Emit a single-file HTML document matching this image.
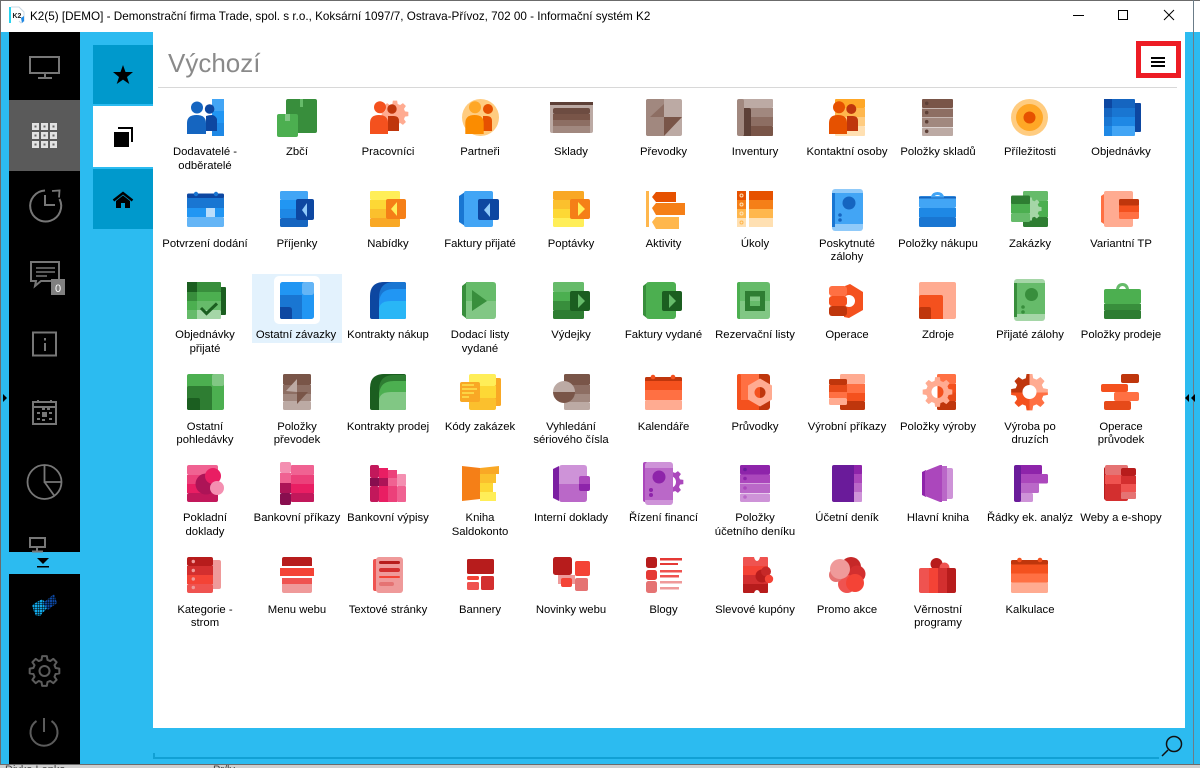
<!DOCTYPE html>
<html lang="cs">
<head>
<meta charset="utf-8">
<title>K2</title>
<style>
html,body{margin:0;padding:0;width:1200px;height:768px;overflow:hidden;background:#2cbbf0}
body{position:relative;font-family:"Liberation Sans",Arial,sans-serif;color:#000}
.a{position:absolute}
.l{position:absolute;width:100px;margin-left:-50px;text-align:center;font-size:11.3px;line-height:13.5px;color:#000;white-space:nowrap}
#title{left:30px;top:9px;font-size:11.7px;line-height:14px;white-space:nowrap;color:#000}
#h{left:168px;top:47px;font-size:26px;line-height:32px;color:#8a8a8a}
.bt{top:765px;height:3px;overflow:hidden;font-size:11px;color:#444;line-height:12px;white-space:nowrap}
.bt span{display:block;margin-top:-1px}
svg{position:absolute;left:0;top:0}
</style>
</head>
<body>
<div class="a" style="left:0;top:0;width:1200px;height:32px;background:#fff"></div>
<div class="a" style="left:0;top:0;width:1200px;height:1px;background:#6b6b6b"></div>
<div class="a" style="left:0;top:0;width:1px;height:768px;background:#6b6b6b"></div>
<div class="a" style="left:1193px;top:0;width:1px;height:764px;background:#6b7c88"></div>
<div class="a" style="left:0;top:764px;width:1200px;height:1px;background:#6b6b6b"></div>
<div class="a" style="left:0;top:765px;width:1200px;height:3px;background:#cfcfcf"></div>
<div class="a bt" style="left:5px"><span>Divka Lenka</span></div>
<div class="a bt" style="left:213px"><span>Pr/ly</span></div>
<div class="a" style="left:9px;top:32px;width:71px;height:520px;background:#000"></div>
<div class="a" style="left:9px;top:100px;width:71px;height:71px;background:#5a5a5a"></div>
<div class="a" style="left:9px;top:574px;width:71px;height:190px;background:#000"></div>
<div class="a" style="left:93px;top:45px;width:60px;height:59px;background:#0099cc"></div>
<div class="a" style="left:93px;top:106px;width:60px;height:61px;background:#fff"></div>
<div class="a" style="left:93px;top:169px;width:60px;height:60px;background:#0099cc"></div>
<div class="a" style="left:153px;top:32px;width:1032px;height:696px;background:#fff"></div>
<div class="a" style="left:158px;top:87px;width:1019px;height:1px;background:#d8d8d8"></div>
<div class="a" style="left:252px;top:274px;width:90px;height:69px;background:#e3f2fd"></div>
<div class="a" style="left:274px;top:276px;width:46px;height:48px;background:#fff;border-radius:5px"></div>
<div class="a" style="left:1136px;top:41px;width:35px;height:27px;border:5px solid #ed1c24"></div>
<div class="a" style="left:1151px;top:57px;width:14px;height:2px;background:#000"></div>
<div class="a" style="left:1151px;top:61px;width:14px;height:2px;background:#000"></div>
<div class="a" style="left:1151px;top:65px;width:14px;height:2px;background:#000"></div>
<div class="a" style="left:153px;top:757px;width:1006px;height:2px;background:#11a0d4"></div>
<div class="a" style="left:153px;top:753px;width:2px;height:5px;background:#11a0d4"></div>
<div class="a" id="title" style="top:10px">K2(5) [DEMO] - Demonstrační firma Trade, spol. s r.o., Koksární 1097/7, Ostrava-Přívoz, 702 00 - Informační systém K2</div>
<div class="a" id="h">Výchozí</div>

<svg width="1200" height="768" viewBox="0 0 1200 768">
<defs>
<pattern id="ck" width="2.500" height="2.500" patternUnits="userSpaceOnUse"><rect width="2" height="2" fill="#fff"/></pattern>
<mask id="dm"><rect width="1200" height="768" fill="url(#ck)"/></mask>
<polygon id="gear" points="-2.98,-11.11 -2.35,-14.82 2.35,-14.82 2.98,-11.11 5.75,-9.96 8.82,-12.14 12.14,-8.82 9.96,-5.75 11.11,-2.98 14.82,-2.35 14.82,2.35 11.11,2.98 9.96,5.75 12.14,8.82 8.82,12.14 5.75,9.96 2.98,11.11 2.35,14.82 -2.35,14.82 -2.98,11.11 -5.75,9.96 -8.82,12.14 -12.14,8.82 -9.96,5.75 -11.11,2.98 -14.82,2.35 -14.82,-2.35 -11.11,-2.98 -9.96,-5.75 -12.14,-8.82 -8.82,-12.14 -5.75,-9.96"/>
<clipPath id="q1"><rect x="0" y="0" width="18.5" height="18.5"/></clipPath>
<clipPath id="q2"><rect x="18.5" y="0" width="18.5" height="18.5"/></clipPath>
<clipPath id="q3"><rect x="0" y="18.5" width="18.5" height="18.5"/></clipPath>
<clipPath id="q4"><rect x="18.5" y="18.5" width="18.5" height="18.5"/></clipPath>
</defs>

<!-- title bar -->
<g>
<rect x="9" y="7" width="2" height="16" fill="#29d3ee"/>
<path d="M11 7h8l5 5v9l-3 2-2-2" fill="none" stroke="#c8d8e4" stroke-width="1"/>
<text x="12.5" y="18" font-family="Liberation Sans" font-weight="700" font-size="7" fill="#222">K2</text>
<path d="M21 18l3-2v5l-2 2z" fill="#1e88e5"/>
<rect x="1073" y="15" width="11" height="1" fill="#000"/>
<rect x="1118.5" y="10.5" width="9" height="9" fill="none" stroke="#000"/>
<path d="M1164 10l10 10M1174 10l-10 10" stroke="#000" stroke-width="1"/>
</g>

<!-- left sidebar icons -->
<g fill="none" stroke="#777" stroke-width="2">
<rect x="30" y="57" width="29" height="16"/>
<path d="M45 74v3M38 78h14" />
</g>
<g>
<g fill="#e2e2e2"><rect x="32" y="123" width="7" height="7"/><rect x="41" y="123" width="7" height="7"/><rect x="50" y="123" width="7" height="7"/><rect x="32" y="132" width="7" height="7"/><rect x="41" y="132" width="7" height="7"/><rect x="50" y="132" width="7" height="7"/><rect x="32" y="141" width="7" height="7"/><rect x="41" y="141" width="7" height="7"/><rect x="50" y="141" width="7" height="7"/></g>
<g fill="#666"><rect x="34.500" y="125.500" width="2" height="2"/><rect x="43.500" y="125.500" width="2" height="2"/><rect x="52.500" y="125.500" width="2" height="2"/><rect x="34.500" y="134.500" width="2" height="2"/><rect x="43.500" y="134.500" width="2" height="2"/><rect x="52.500" y="134.500" width="2" height="2"/><rect x="34.500" y="143.500" width="2" height="2"/><rect x="43.500" y="143.500" width="2" height="2"/><rect x="52.500" y="143.500" width="2" height="2"/></g>
</g>
<g fill="none" stroke="#777" stroke-width="2">
<path d="M45 190.500A15.500 15.500 0 1 0 59.500 199"/>
<path d="M52 191l7.500-.5-.5 7" stroke-width="1.800"/>
<path d="M45 195v10h10"/>
<path d="M31 262h28v19H41l-6 5 1-5h-5z"/>
<path d="M36 268h19M36 272h19M36 276h11" stroke-width="1.600"/>
<rect x="33" y="332.500" width="23" height="23"/>
<path d="M45 343v8M45 338v2.500"/>
<rect x="33" y="402" width="23" height="22"/>
<path d="M33 407h23M38 400v3M51 400v3"/>
</g>
<g fill="#777"><rect x="42" y="412" width="5" height="5"/><rect x="37" y="412" width="3" height="2"/><rect x="49" y="412" width="3" height="2"/><rect x="37" y="418" width="3" height="2"/><rect x="42" y="419" width="3" height="2"/><rect x="49" y="418" width="3" height="2"/><rect x="42" y="408" width="3" height="2"/><rect x="47" y="408" width="3" height="2"/></g>
<rect x="51" y="279" width="14" height="16" fill="#808080"/>
<text x="58" y="292" text-anchor="middle" font-family="Liberation Sans" font-size="11" fill="#fff">0</text>
<g fill="none" stroke="#777" stroke-width="1.800">
<circle cx="44.500" cy="482" r="17"/>
<path d="M44.500 465v17h17M44.500 482l10 14"/>
<rect x="30" y="538" width="15" height="9" stroke-width="2"/>
<path d="M37 548v3M32 551.500h11" stroke-width="2"/>
</g>
<path d="M37 558h12l-6 6z" fill="#000"/>
<rect x="37" y="566" width="12" height="1.500" fill="#000"/>
<g mask="url(#dm)">
<path d="M32 605l10-6 7 7-9 10-5-1z" fill="#12aaea"/>
<path d="M43 603l11-9 3 9-9 7z" fill="#0d47a1"/>
</g>
<g fill="none" stroke="#5c5c5c" stroke-width="2">
<use href="#gear" transform="translate(44.500,671)" stroke-linejoin="round"/>
<circle cx="44.500" cy="671" r="5"/>
<path d="M36.500 721A13.500 13.500 0 1 0 51.500 721"/>
<path d="M44 718v14"/>
</g>
<path d="M3 394l4 4-4 4z" fill="#000"/>
<path d="M1189 394l-4 4 4 4zM1195 394l-4 4 4 4z" fill="#000"/>

<!-- tabs -->
<polygon points="123,65 125.500,72 133,72 127,77 129.300,84 123,79.600 116.700,84 119,77 113,72 120.500,72" fill="#000"/>
<path d="M118 127h15v15h-2v-13h-13z" fill="#000"/>
<rect x="114" y="132" width="15" height="15" fill="#000"/>
<path d="M113.500 200.500l9.500-7.500 9.500 7.500" fill="none" stroke="#000" stroke-width="2.400"/>
<path d="M116 201l7-5.500 7 5.500v7h-5v-5h-4v5h-5z" fill="#000"/>

<!-- search -->
<g fill="none" stroke="#111" stroke-width="1.500"><circle cx="1174" cy="744" r="7.500"/><path d="M1168 750l-6 6"/></g>

<!-- ICONS ROW 0 -->
<g transform="translate(187,99)">
<rect x="25" width="12" height="12" fill="#42a5f5"/><rect x="25" y="12" width="12" height="12" fill="#2196f3"/><rect x="25" y="24" width="12" height="13" fill="#1e88e5"/>
<circle cx="22.600" cy="10" r="4.800" fill="#0d47a1"/><path d="M19 17q3-1 6-1t5 4v12H19z" fill="#0d47a1"/>
<circle cx="10" cy="8.500" r="6" fill="#1565c0"/><path d="M0 35V24q0-8 9.500-8T19 24v11z" fill="#1565c0"/>
</g>
<g transform="translate(277,99)">
<rect x="9" width="31" height="34" rx="2" fill="#388e3c"/><rect x="23" width="3" height="8" fill="#66bb6a"/>
<rect y="15" width="21" height="23" rx="2" fill="#4caf50"/><rect x="8" y="15" width="5" height="7" fill="#81c784"/>
</g>
<g transform="translate(370,99)">
<use href="#gear" transform="translate(25,15) scale(.9)" fill="#ffab91"/>
<circle cx="22" cy="10" r="4.700" fill="#bf360c"/><path d="M18 17h6q5 0 5 5v10H18z" fill="#bf360c"/>
<circle cx="10" cy="8.300" r="6" fill="#f4511e"/><path d="M0 35V24q0-8 9-8t9 8v11z" fill="#f4511e"/>
</g>
<g transform="translate(462,99)">
<circle cx="18.500" cy="18.500" r="18.500" fill="#ffcc80"/>
<circle cx="13" cy="8.300" r="6" fill="#ffa726"/><circle cx="26" cy="10" r="5" fill="#e65100"/>
<path d="M21 17h4q5 0 5 5v10h-9z" fill="#e65100"/><path d="M3.300 35V24q0-8 9.200-8t9.200 8v11z" fill="#fb8c00"/>
</g>
<g transform="translate(550,99)">
<rect y="3" width="43" height="31" rx="2" fill="#bcaaa4"/><rect y="3" width="43" height="3" fill="#5d4037"/>
<rect x="3" y="9" width="37" height="6" rx="2" fill="#6d4c41"/><rect x="3" y="15" width="37" height="6" fill="#795548"/><rect x="3" y="21" width="37" height="6" fill="#8d6e63"/><rect x="3" y="27" width="37" height="7" fill="#a1887f"/>
</g>
<g transform="translate(646,99)">
<rect width="36" height="37" rx="2" fill="#bcaaa4"/><path d="M2 0h16v37H2q-2 0-2-2V2q0-2 2-2z" fill="#a1887f"/>
<path d="M4 18L18 5v13z" fill="#8d6e63"/><path d="M18 18h18L18 37z" fill="#795548"/>
</g>
<g transform="translate(737,99)">
<rect x="5" y="0" width="31" height="9" rx="1" fill="#bcaaa4"/><rect x="5" y="9" width="31" height="9" fill="#a1887f"/><rect x="5" y="18" width="31" height="9" fill="#8d6e63"/><rect x="5" y="27" width="31" height="10" rx="1" fill="#795548"/>
<rect width="7" height="37" rx="2" fill="#a1887f"/><path d="M7 9h5q2 0 2 2v26H7z" fill="#5d4037"/>
</g>
<g transform="translate(829,99)">
<rect x="6" width="30" height="9" rx="1" fill="#ffa726"/><rect x="6" y="9" width="30" height="9" fill="#ffb74d"/><rect x="6" y="18" width="30" height="9" fill="#ffcc80"/><rect x="6" y="27" width="30" height="10" rx="1" fill="#ffe0b2"/>
<circle cx="22.300" cy="10" r="5" fill="#bf360c"/><path d="M18 17h6q5 0 5 5v10H18z" fill="#bf360c"/>
<circle cx="10" cy="8.300" r="6" fill="#e65100"/><path d="M0 35V24q0-8 9-8t9 8v11z" fill="#e65100"/>
</g>
<g transform="translate(922,99)">
<rect width="31" height="9" rx="1" fill="#795548"/><rect y="9.500" width="31" height="9" fill="#8d6e63"/><rect y="19" width="31" height="9" fill="#a1887f"/><rect y="28.500" width="31" height="8.500" rx="1" fill="#bcaaa4"/>
<g fill="#5d4037"><circle cx="4.700" cy="4.300" r="1.800"/><circle cx="4.700" cy="13.600" r="1.800"/><circle cx="4.700" cy="22.700" r="1.800"/><circle cx="4.700" cy="32.300" r="1.800"/></g>
</g>
<g transform="translate(1011,99)"><circle cx="18.500" cy="18.500" r="18.500" fill="#ffcc80"/><circle cx="18.500" cy="18.500" r="13.500" fill="#ffa726"/><circle cx="18.500" cy="18.500" r="6" fill="#e65100"/></g>
<g transform="translate(1104,99)">
<rect x="29" y="4" width="8" height="29" rx="1" fill="#0d47a1"/>
<rect width="31" height="9.500" rx="1" fill="#1565c0"/><rect y="9" width="31" height="9.500" fill="#1976d2"/><rect y="18" width="31" height="9.500" fill="#1e88e5"/><rect y="27" width="31" height="10" rx="1" fill="#42a5f5"/>
<rect width="8" height="9" fill="#0d47a1"/><rect y="9" width="8" height="9" fill="#1565c0"/><rect y="18" width="8" height="9" fill="#1976d2"/><rect y="27" width="8" height="10" fill="#1e88e5"/>
</g>

<!-- ROW 1 -->
<g transform="translate(187,191)">
<rect y="2.500" width="37" height="5" rx="1.500" fill="#0d47a1"/><circle cx="9" cy="3" r="2.200" fill="#1976d2"/><circle cx="29" cy="3" r="2.200" fill="#1976d2"/>
<rect y="7" width="37" height="10" fill="#1976d2"/><rect y="17" width="37" height="9" fill="#2196f3"/><rect y="26" width="37" height="10" rx="1.500" fill="#64b5f6"/><rect x="19" y="17" width="9" height="9" fill="#bbdefb"/>
</g>
<g transform="translate(280,191)">
<rect width="28" height="9" rx="1.500" fill="#42a5f5"/><rect y="9" width="28" height="9" fill="#2196f3"/><rect y="18" width="28" height="9" fill="#1e88e5"/><rect y="27" width="28" height="9" rx="1.500" fill="#1565c0"/>
<rect x="16" y="8" width="18" height="21" rx="2" fill="#0d47a1"/><path d="M22 19l5-7v14z" fill="#90caf9"/>
</g>
<g transform="translate(370,191)">
<rect width="30" height="9" rx="1.500" fill="#ffee58"/><rect y="9" width="30" height="9" fill="#fdd835"/><rect y="18" width="30" height="9" fill="#fbc02d"/><rect y="27" width="30" height="9" rx="1.500" fill="#f9a825"/>
<rect x="16" y="8" width="20" height="20" rx="2" fill="#f57f17"/><path d="M21 18l6-7v14z" fill="#ffee58"/>
</g>
<g transform="translate(459,191)">
<path d="M0 5l6-4v34l-6-4z" fill="#1976d2"/><rect x="5" width="29" height="36" rx="2" fill="#42a5f5"/>
<rect x="19" y="8" width="21" height="21" rx="2" fill="#0d47a1"/><path d="M25 19l6-7v14z" fill="#90caf9"/>
</g>
<g transform="translate(553,191)">
<rect width="31" height="9" rx="1.500" fill="#f9a825"/><rect y="9" width="31" height="9" fill="#fbc02d"/><rect y="18" width="31" height="9" fill="#fdd835"/><rect y="27" width="31" height="9" rx="1.500" fill="#ffee58"/>
<rect x="17" y="8" width="20" height="20" rx="2" fill="#f57f17"/><path d="M25 11l7 7-7 7z" fill="#ffee58"/>
</g>
<g transform="translate(646,191)">
<rect width="3" height="36" fill="#ffb74d"/>
<path d="M6 6l4-5h20v10H10z" fill="#e65100"/><path d="M6 17l4-5h29v12H10z" fill="#f57f17"/><path d="M6 31l4-5h23v12H10z" fill="#ffb74d"/>
</g>
<g transform="translate(737,191)">
<rect width="9" height="9" fill="#e65100"/><rect y="9" width="9" height="9" fill="#f57f17"/><rect y="18" width="9" height="9" fill="#ffb74d"/><rect y="27" width="9" height="9" fill="#ffe0b2"/>
<rect x="12" width="24" height="9" fill="#e65100"/><rect x="12" y="9" width="24" height="9" fill="#f57f17"/><rect x="12" y="18" width="24" height="9" fill="#ffb74d"/><rect x="12" y="27" width="24" height="9" fill="#ffe0b2"/>
<g fill="none" stroke="#ffe0b2" stroke-width="1"><circle cx="4.500" cy="4.500" r="1.500"/><circle cx="4.500" cy="13.500" r="1.500"/><circle cx="4.500" cy="22.500" r="1.500"/></g><circle cx="4.500" cy="31.500" r="1.500" fill="none" stroke="#ffb74d"/>
</g>
<g transform="translate(832,189)">
<rect width="31" height="42" rx="3" fill="#90caf9"/><rect x="0" y="4" width="3" height="34" fill="#1976d2"/><rect x="3" y="4" width="28" height="31" fill="#42a5f5"/>
<circle cx="17" cy="14" r="6.500" fill="#1565c0"/><circle cx="8" cy="26" r="1.800" fill="#1565c0"/><circle cx="8" cy="31" r="1.800" fill="#1565c0"/>
</g>
<g transform="translate(919,191)">
<path d="M12 6q1-5 6.500-5T25 6h-3q-1-2-3.500-2T15 6z" fill="#42a5f5"/>
<rect y="5" width="37" height="12" rx="2" fill="#42a5f5"/><rect y="5.500" width="37" height="2" fill="#1565c0"/><rect x="12" y="5" width="13" height="1.500" fill="#42a5f5"/>
<rect y="17" width="37" height="9" fill="#1e88e5"/><rect y="26" width="37" height="10" rx="1.500" fill="#1976d2"/>
</g>
<g transform="translate(1011,191)">
<rect x="12" width="25" height="10" rx="1.500" fill="#66bb6a"/><rect x="12" y="10" width="25" height="16" fill="#4caf50"/><rect x="12" y="26" width="25" height="10" rx="1.500" fill="#2e7d32"/>
<use href="#gear" transform="translate(19,18) scale(.78)" fill="#a5d6a7"/>
<rect y="4.500" width="19" height="9" rx="1.500" fill="#2e7d32"/><rect y="13" width="19" height="9" fill="#4caf50"/><rect y="22" width="19" height="9" rx="1.500" fill="#66bb6a"/>
</g>
<g transform="translate(1101,191)">
<path d="M0 5l6-4v34l-6-4z" fill="#ff7043"/><rect x="3" width="29" height="36" rx="2" fill="#ffab91"/>
<rect x="18" y="8" width="20" height="7" rx="1.500" fill="#bf360c"/><rect x="18" y="14.500" width="20" height="7" fill="#f4511e"/><rect x="18" y="21" width="20" height="7" rx="1.500" fill="#ff7043"/>
</g>

<!-- ROW 2 -->
<g transform="translate(187,282)">
<rect x="32" y="5" width="7" height="28" rx="1" fill="#1b5e20"/>
<rect width="34" height="10" rx="1" fill="#388e3c"/><rect y="10" width="34" height="9" fill="#4caf50"/><rect y="19" width="34" height="9" fill="#66bb6a"/><rect y="28" width="34" height="9" rx="1" fill="#a5d6a7"/>
<rect width="10" height="10" fill="#1b5e20"/><rect y="10" width="10" height="9" fill="#388e3c"/><rect y="19" width="10" height="9" fill="#4caf50"/><rect y="28" width="10" height="9" fill="#66bb6a"/>
<path d="M14 26l5.500 5.500L30 21.500" fill="none" stroke="#1b5e20" stroke-width="3"/>
</g>
<g transform="translate(280,282)">
<rect width="34" height="37" rx="2.500" fill="#2196f3"/><rect x="22" width="12" height="13" rx="2.500" fill="#64b5f6"/><path d="M0 13h22v24H2q-2 0-2-2z" fill="#1976d2"/><path d="M0 25h9q3 0 3 3v9H2q-2 0-2-2z" fill="#0d47a1"/>
</g>
<g transform="translate(370,282)">
<path d="M0 35V14Q0 0 14 0h20q2 0 2 2v33q0 2-2 2H2q-2 0-2-2z" fill="#0d47a1"/>
<path d="M9 37V16Q9 0 24 0h10q2 0 2 2v33q0 2-2 2z" fill="#1976d2"/>
<path d="M9 37V22Q9 7 24 7h12v28q0 2-2 2z" fill="#2196f3"/>
<path d="M9 37v-9q0-9 12-9h15v16q0 2-2 2z" fill="#29b6f6"/>
</g>
<g transform="translate(462,282)">
<path d="M0 4l5-4v37l-5-4z" fill="#388e3c"/><path d="M4 0h27q3 0 3 3v16H4z" fill="#66bb6a"/><path d="M4 19h30v15q0 3-3 3H4z" fill="#81c784"/><path d="M10 8l15 11-15 10z" fill="#388e3c"/>
</g>
<g transform="translate(553,282)">
<rect width="31" height="10" rx="1.500" fill="#66bb6a"/><rect y="10" width="31" height="9" fill="#4caf50"/><rect y="19" width="31" height="9" fill="#388e3c"/><rect y="28" width="31" height="9" rx="1.500" fill="#2e7d32"/>
<rect x="17" y="9" width="20" height="20" rx="2" fill="#1b5e20"/><path d="M25 12l7 7-7 7z" fill="#66bb6a"/>
</g>
<g transform="translate(643,282)">
<path d="M0 4l5-4v37l-5-4z" fill="#388e3c"/><rect x="3" width="30" height="37" rx="3" fill="#4caf50"/>
<rect x="19" y="9" width="20" height="20" rx="2" fill="#1b5e20"/><path d="M26 12l7 7-7 7z" fill="#66bb6a"/>
</g>
<g transform="translate(737,282)">
<rect width="5" height="37" rx="2" fill="#4caf50"/><path d="M3 0h27q3 0 3 3v16H3z" fill="#66bb6a"/><path d="M3 19h30v15q0 3-3 3H3z" fill="#81c784"/>
<rect x="8" y="9" width="20" height="20" fill="#2e7d32"/><rect x="13" y="14.500" width="10" height="4.500" fill="#81c784"/><rect x="13" y="19" width="10" height="5" fill="#66bb6a"/>
</g>
<g transform="translate(829,282)">
<path fill-rule="evenodd" d="M16 4l5-2 13 8v18l-14 8-5-1zM20 13a6 6 0 1 0 0 12 6 6 0 0 0 0-12z" fill="#f4511e"/>
<rect y="4" width="18" height="10" rx="3" fill="#ff7043"/><rect y="14" width="18" height="10" rx="3" fill="#f4511e"/><rect y="24" width="18" height="10" rx="3" fill="#bf360c"/>
</g>
<g transform="translate(919,282)">
<rect width="37" height="37" rx="2" fill="#ffab91"/><path d="M0 15q0-2 2-2h20q2 0 2 2v22H2q-2 0-2-2z" fill="#f4511e"/><path d="M0 27q0-2 2-2h8q2 0 2 2v10H2q-2 0-2-2z" fill="#bf360c"/>
</g>
<g transform="translate(1014,279)">
<rect width="31" height="42" rx="3" fill="#a5d6a7"/><rect x="0" y="4" width="3" height="34" fill="#388e3c"/><rect x="3" y="4" width="28" height="31" fill="#66bb6a"/>
<circle cx="17.500" cy="15.500" r="6.500" fill="#388e3c"/><circle cx="9" cy="28" r="1.800" fill="#388e3c"/><circle cx="9" cy="33" r="1.800" fill="#388e3c"/>
</g>
<g transform="translate(1104,282)">
<path d="M12 7q1-6 6.500-6T25 7h-3q-1-3-3.500-3T15 7z" fill="#66bb6a"/>
<rect y="7" width="37" height="15" rx="2" fill="#4caf50"/><rect y="22" width="37" height="6" fill="#388e3c"/><rect y="28" width="37" height="9" rx="1.500" fill="#2e7d32"/>
</g>

<!-- ROW 3 -->
<g transform="translate(187,374)">
<rect width="37" height="36" rx="2" fill="#4caf50"/><rect x="25" width="12" height="12" rx="2" fill="#81c784"/><path d="M0 14q0-2 2-2h21q2 0 2 2v22H2q-2 0-2-2z" fill="#2e7d32"/><path d="M0 26q0-2 2-2h9q2 0 2 2v10H2q-2 0-2-2z" fill="#1b5e20"/>
</g>
<g transform="translate(283,374)">
<rect width="28" height="11" rx="1.500" fill="#795548"/><rect y="11" width="28" height="9" fill="#8d6e63"/><rect y="20" width="28" height="7" fill="#a1887f"/><rect y="27" width="28" height="9" rx="1.500" fill="#bcaaa4"/>
<path d="M3 17l11-12v13z" fill="#bcaaa4"/><path d="M14 18h11L14 30z" fill="#795548"/>
</g>
<g transform="translate(370,374)">
<path d="M0 34V14Q0 0 14 0h20q2 0 2 2v32q0 2-2 2H2q-2 0-2-2z" fill="#1b5e20"/>
<path d="M9 36V16Q9 1 24 1h12v33q0 2-2 2z" fill="#2e7d32"/>
<path d="M9 36V22Q9 7 24 7h12v27q0 2-2 2z" fill="#4caf50"/>
<path d="M9 36v-9q0-9 12-9h15v16q0 2-2 2z" fill="#81c784"/>
</g>
<g transform="translate(460,374)">
<rect x="30" y="4" width="11" height="28" rx="1.500" fill="#f9a825"/><rect x="9" width="27" height="12" rx="2" fill="#ffee58"/><rect x="9" y="12" width="27" height="12" fill="#fdd835"/><rect x="9" y="24" width="27" height="12" rx="2" fill="#fbc02d"/>
<rect y="8" width="20" height="20" rx="2" fill="#f9a825"/><path d="M2 11h12M2 15h15M2 19h12M2 23h7" stroke="#ffee58" stroke-width="1.300"/>
</g>
<g transform="translate(553,374)">
<rect x="11" width="26" height="11" rx="1.500" fill="#795548"/><rect x="11" y="11" width="26" height="9" fill="#8d6e63"/><rect x="11" y="20" width="26" height="8" fill="#a1887f"/><rect x="11" y="28" width="26" height="8" rx="1.500" fill="#bcaaa4"/>
<path d="M0 18a11 11 0 0 1 22 0z" fill="#bcaaa4"/><path d="M0 18a11 11 0 0 0 22 0z" fill="#795548"/>
</g>
<g transform="translate(645,374)">
<rect y="3" width="37" height="5" rx="1.500" fill="#bf360c"/><circle cx="8" cy="3" r="2.300" fill="#f4511e"/><circle cx="28" cy="3" r="2.300" fill="#f4511e"/>
<rect y="7" width="37" height="9" fill="#f4511e"/><rect y="16" width="37" height="10" fill="#ff7043"/><rect y="26" width="37" height="10" rx="1.500" fill="#ffab91"/>
</g>
<g transform="translate(737,374)">
<rect width="33" height="36" rx="3" fill="#bf360c"/><path d="M3 0h19v11L12 18l10 7v11H3q-3 0-3-3V3q0-3 3-3z" fill="#ff7043"/><path d="M0 26h22v10H3q-3 0-3-3z" fill="#f4511e"/><rect width="4" height="36" rx="2" fill="#f4511e"/>
<path d="M23 4.500l12 7v14l-12 7-12-7v-14z" fill="#ffab91"/><path d="M23 13a5.500 5.500 0 0 0 0 11z" fill="#f4511e"/><path d="M23 13a5.500 5.500 0 0 1 0 11z" fill="#bf360c"/>
</g>
<g transform="translate(829,374)">
<rect x="11" width="25" height="10" rx="1.500" fill="#ffab91"/><rect x="11" y="10" width="25" height="9" fill="#ff7043"/><rect x="11" y="19" width="25" height="8" fill="#f4511e"/><rect x="11" y="27" width="25" height="9" rx="1.500" fill="#bf360c"/>
<rect y="5" width="18" height="6" rx="1.500" fill="#bf360c"/><rect y="11" width="18" height="7" fill="#e64a19"/><rect y="18" width="18" height="6" fill="#ff7043"/><rect y="24" width="18" height="7" rx="1.500" fill="#ffab91"/>
</g>
<g transform="translate(922,374)">
<rect x="15" width="19" height="10" rx="1.500" fill="#ff7043"/><rect x="15" y="10" width="19" height="8.500" fill="#f4511e"/><rect x="15" y="18.500" width="19" height="8.500" fill="#e64a19"/><rect x="15" y="27" width="19" height="9" rx="1.500" fill="#bf360c"/>
<use href="#gear" transform="translate(15.500,18)" fill="#ffab91"/>
<path d="M15.500 12a6 6 0 0 0 0 12z" fill="#fff"/><path d="M15.500 12a6 6 0 0 1 0 12z" fill="#f4511e"/>
</g>
<g transform="translate(1011,374)">
<g clip-path="url(#q1)"><use href="#gear" transform="translate(18.500,18) scale(1.240)" fill="#bf360c"/></g>
<g clip-path="url(#q2)"><use href="#gear" transform="translate(18.500,18) scale(1.240)" fill="#ffab91"/></g>
<g clip-path="url(#q3)"><use href="#gear" transform="translate(18.500,18) scale(1.240)" fill="#f4511e"/></g>
<g clip-path="url(#q4)"><use href="#gear" transform="translate(18.500,18) scale(1.240)" fill="#ff7043"/></g>
<circle cx="18.500" cy="18" r="7" fill="#fff"/>
</g>
<g transform="translate(1101,374)">
<rect x="20" width="18" height="9" rx="2" fill="#bf360c"/><rect y="10" width="27" height="8" rx="2" fill="#f4511e"/><rect x="13" y="18" width="25" height="9" rx="2" fill="#ff7043"/><rect x="3" y="27" width="27" height="9" rx="2" fill="#e64a19"/>
</g>

<!-- ROW 4 -->
<g transform="translate(187,465)">
<rect width="31" height="10" rx="2" fill="#f06292"/><rect y="10" width="31" height="9" fill="#ec407a"/><rect y="19" width="31" height="9" fill="#e91e63"/><rect y="28" width="31" height="9" rx="2" fill="#c2185b"/>
<circle cx="19" cy="19" r="10.500" fill="#ad1457"/><circle cx="26" cy="11" r="8" fill="#e91e63"/><circle cx="30" cy="23" r="7" fill="#f48fb1"/>
</g>
<g transform="translate(280,462)">
<rect y="3" x="11" width="23" height="10" rx="1" fill="#f06292"/><rect y="13" x="11" width="23" height="9" fill="#ec407a"/><rect y="22" x="11" width="23" height="9" fill="#e91e63"/><rect y="31" x="11" width="23" height="9" rx="1" fill="#c2185b"/>
<rect width="11" height="11" rx="2" fill="#f48fb1"/><rect y="11" width="11" height="10" fill="#f06292"/><rect y="21" width="11" height="10" fill="#ad1457"/><rect y="31" width="11" height="12" rx="2" fill="#880e4f"/>
</g>
<g transform="translate(370,465)">
<rect width="9" height="13" rx="2" fill="#c2185b"/><rect y="13" width="9" height="8" fill="#880e4f"/><rect y="21" width="9" height="16" rx="2" fill="#c2185b"/>
<rect x="9" y="3" width="9" height="10" fill="#e91e63"/><rect x="9" y="13" width="9" height="8" fill="#ad1457"/><rect x="9" y="21" width="9" height="16" fill="#e91e63"/>
<rect x="18" y="5" width="9" height="8" fill="#ec407a"/><rect x="18" y="13" width="9" height="8" fill="#f06292"/><rect x="18" y="21" width="9" height="16" fill="#ec407a"/>
<rect x="27" y="9" width="9" height="12" rx="1" fill="#f48fb1"/><rect x="27" y="21" width="9" height="16" rx="1" fill="#f06292"/>
</g>
<g transform="translate(462,465)">
<path d="M0 1l18 2v31L0 36z" fill="#f57f17"/>
<path d="M18 3l19-2v8H18z" fill="#f9a825"/><path d="M18 9h16v9H18z" fill="#fbc02d"/><path d="M18 18h13v9H18z" fill="#fdd835"/><path d="M18 27h16v9H18z" fill="#ffee58"/>
</g>
<g transform="translate(553,465)">
<path d="M0 4l6-3v35l-6-3z" fill="#7b1fa2"/><path d="M6 3q0-3 3-3h22q3 0 3 3v16H6z" fill="#ce93d8"/><path d="M6 19h28v15q0 3-3 3H9q-3 0-3-3z" fill="#ba68c8"/>
<path d="M26 13q0-2 2-2h7q2 0 2 2v6H26z" fill="#ab47bc"/><path d="M26 19h11v5q0 2-2 2h-7q-2 0-2-2z" fill="#8e24aa"/>
</g>
<g transform="translate(643,462)">
<use href="#gear" transform="translate(27,20) scale(.9)" fill="#ab47bc"/><circle cx="27" cy="20" r="6" fill="#fff"/>
<rect width="5" height="40" rx="2" fill="#ab47bc"/><rect x="2" width="28" height="43" rx="3" fill="#ce93d8"/><rect x="2" y="6" width="28" height="32" fill="#ba68c8"/>
<circle cx="16" cy="15" r="6.500" fill="#8e24aa"/><circle cx="8" cy="28" r="2" fill="#8e24aa"/><circle cx="8" cy="33" r="2" fill="#8e24aa"/>
</g>
<g transform="translate(740,465)">
<rect width="30" height="9.500" rx="1.500" fill="#8e24aa"/><rect y="9.500" width="30" height="9" fill="#ab47bc"/><rect y="19" width="30" height="9" fill="#ba68c8"/><rect y="28.500" width="30" height="8.500" rx="1.500" fill="#ce93d8"/>
<circle cx="5" cy="4.500" r="1.800" fill="#6a1b9a"/><circle cx="5" cy="13.500" r="1.800" fill="#8e24aa"/><circle cx="5" cy="23" r="1.800" fill="#ab47bc"/><circle cx="5" cy="32" r="1.800" fill="#ba68c8"/>
</g>
<g transform="translate(832,465)">
<rect x="20" width="10" height="9.500" rx="1" fill="#8e24aa"/><rect x="20" y="9" width="10" height="9.500" fill="#ab47bc"/><rect x="20" y="18" width="10" height="9.500" fill="#ba68c8"/><rect x="20" y="27" width="10" height="10" rx="1" fill="#ce93d8"/>
<path d="M2 0h20v37H2q-2 0-2-2V2q0-2 2-2z" fill="#6a1b9a"/>
</g>
<g transform="translate(922,465)">
<rect x="18" y="3" width="13" height="31" rx="2" fill="#ce93d8"/><rect x="18" y="1" width="7" height="35" fill="#ba68c8"/>
<path d="M0 7l4-2v27l-4-2z" fill="#8e24aa"/><path d="M3 6l15-6h2v37h-2L3 31z" fill="#ab47bc"/>
</g>
<g transform="translate(1014,465)">
<rect x="5" width="23" height="9.500" rx="1.500" fill="#8e24aa"/><rect x="5" y="9" width="29" height="9.500" rx="1.500" fill="#ab47bc"/><rect x="5" y="18" width="20" height="10" rx="1.500" fill="#ba68c8"/><rect x="5" y="28" width="14" height="9" rx="1.500" fill="#ce93d8"/>
<rect width="7" height="37" rx="2" fill="#6a1b9a"/>
</g>
<g transform="translate(1104,465)">
<path d="M0 4q0-2 2-2v33q-2 0-2-2z" fill="#b71c1c"/><rect x="1" width="23" height="10" rx="2" fill="#e57373"/><rect x="1" y="10" width="23" height="9" fill="#ef5350"/><rect x="1" y="19" width="23" height="17" rx="2" fill="#d32f2f"/>
<rect x="17" y="3" width="15" height="8" rx="2" fill="#b71c1c"/><rect x="17" y="11" width="15" height="8" fill="#d32f2f"/><rect x="17" y="19" width="15" height="8" fill="#ef5350"/><rect x="17" y="27" width="15" height="7" rx="1" fill="#e57373"/>
</g>

<!-- ROW 5 -->
<g transform="translate(187,557)">
<rect x="20" y="3" width="14" height="29" rx="2" fill="#ef9a9a"/>
<rect width="26" height="9" rx="2" fill="#b71c1c"/><rect y="9" width="26" height="9" fill="#d32f2f"/><rect y="18" width="26" height="9" fill="#f44336"/><rect y="27" width="26" height="9" rx="2" fill="#ef5350"/>
<g fill="#ef9a9a"><circle cx="6.300" cy="4.500" r="1.700"/><circle cx="6.300" cy="13.500" r="1.700"/><circle cx="6.300" cy="22" r="1.700"/><circle cx="6.300" cy="30.500" r="1.700"/></g>
</g>
<g transform="translate(280,557)">
<path d="M2 9V2q0-2 2-2h26q2 0 2 2v7z" fill="#b71c1c"/><rect y="11" width="34" height="8" fill="#f44336"/><rect x="2" y="21" width="30" height="6.500" fill="#ef5350"/><path d="M2 27h30v7q0 2-2 2H4q-2 0-2-2z" fill="#ef9a9a"/>
</g>
<g transform="translate(373,557)">
<rect width="8" height="32" y="2" rx="2" fill="#ef5350"/><rect x="3" width="27" height="36" rx="3" fill="#ef9a9a"/>
<rect x="6" y="4" width="21" height="3" rx="1.500" fill="#b71c1c"/><rect x="6" y="11" width="21" height="4" rx="2" fill="#d32f2f"/><rect x="6" y="19" width="21" height="2" rx="1" fill="#f44336"/><rect x="6" y="25" width="15" height="4" rx="2" fill="#e57373"/>
</g>
<g transform="translate(467,557)">
<rect y="2" width="27" height="15" rx="1.500" fill="#b71c1c"/><rect y="19" width="12" height="4" rx="1.500" fill="#f44336"/><rect y="25" width="12" height="8" rx="1.500" fill="#ef5350"/><rect x="14" y="19" width="13" height="14" rx="1.500" fill="#d32f2f"/>
</g>
<g transform="translate(553,557)">
<rect x="5" y="18" width="17" height="9" fill="#ef9a9a"/>
<rect width="19" height="18" rx="2.500" fill="#b71c1c"/><rect x="22" y="4" width="15" height="15" rx="2" fill="#f44336"/><rect x="8" y="21" width="11" height="9" rx="2" fill="#f44336"/><rect x="22" y="21" width="13" height="13" rx="2" fill="#e57373"/>
</g>
<g transform="translate(646,557)">
<rect width="11" height="11" rx="2.500" fill="#b71c1c"/><rect y="13" width="11" height="10" rx="2.500" fill="#e53935"/><rect y="24" width="11" height="12" rx="2.500" fill="#e57373"/>
<g fill="#ef5350"><rect x="14" y="1" width="22" height="2.500" fill="#e53935"/><rect x="14" y="6" width="18" height="2" fill="#e53935"/><rect x="14" y="13" width="22" height="2.500"/><rect x="14" y="18" width="19" height="2.500"/></g>
<rect x="14" y="24" width="22" height="2.500" fill="#ef9a9a"/><rect x="14" y="30" width="19" height="2.500" fill="#ef9a9a"/>
</g>
<g transform="translate(743,557)">
<path d="M1 0h10q1 4 3 4t3-4h7q1 0 1 1v8H0V1q0-1 1-1z" fill="#ef5350"/><rect y="9" width="25" height="9" fill="#f44336"/><rect y="18" width="25" height="9" fill="#d32f2f"/><path d="M0 27h25v8q0 1-1 1h-7q-1-3-3-3t-3 3H1q-1 0-1-1z" fill="#b71c1c"/>
<circle cx="19" cy="19" r="6.500" fill="#b71c1c"/><circle cx="23" cy="14.500" r="5" fill="#c62828"/><circle cx="26" cy="22" r="4.200" fill="#f44336"/>
</g>
<g transform="translate(829,557)">
<circle cx="22" cy="10" r="10" fill="#c62828"/><circle cx="28" cy="17" r="8.500" fill="#d32f2f"/><circle cx="18" cy="27" r="9" fill="#ef5350"/><circle cx="26" cy="26" r="9" fill="#f44336"/><circle cx="7" cy="18" r="7" fill="#e57373"/><circle cx="11" cy="12" r="10" fill="#ef9a9a"/>
</g>
<g transform="translate(919,557)">
<circle cx="17.500" cy="7" r="6" fill="#b71c1c"/><circle cx="25.500" cy="10.500" r="5" fill="#ef5350"/>
<path d="M0 13q0-2 2-2h8v25H2q-2 0-2-2z" fill="#ef5350"/><rect x="10" y="11" width="9" height="25" fill="#f44336"/><rect x="19" y="11" width="9" height="25" fill="#d32f2f"/><path d="M28 11h7q2 0 2 2v21q0 2-2 2h-7z" fill="#b71c1c"/>
</g>
<g transform="translate(1011,557)">
<rect y="3" width="37" height="5" rx="1.500" fill="#bf360c"/><circle cx="8.500" cy="3" r="2.300" fill="#f4511e"/><circle cx="29" cy="3" r="2.300" fill="#f4511e"/>
<rect y="7.500" width="37" height="9" fill="#f4511e"/><rect y="16.500" width="37" height="9" fill="#ff7043"/><rect y="25.500" width="37" height="10.500" rx="1.500" fill="#ffab91"/>
</g>
</svg>

<!-- LABELS -->
<div class="l" style="left:205px;top:146px">Dodavatelé -<br>odběratelé</div>
<div class="l" style="left:297px;top:146px">Zbčí</div>
<div class="l" style="left:388px;top:146px">Pracovníci</div>
<div class="l" style="left:480px;top:146px">Partneři</div>
<div class="l" style="left:571px;top:146px">Sklady</div>
<div class="l" style="left:663.500px;top:146px">Převodky</div>
<div class="l" style="left:755px;top:146px">Inventury</div>
<div class="l" style="left:847px;top:146px">Kontaktní osoby</div>
<div class="l" style="left:938px;top:146px">Položky skladů</div>
<div class="l" style="left:1030px;top:146px">Příležitosti</div>
<div class="l" style="left:1121px;top:146px">Objednávky</div>

<div class="l" style="left:205px;top:237.500px">Potvrzení dodání</div>
<div class="l" style="left:297px;top:237.500px">Příjenky</div>
<div class="l" style="left:388px;top:237.500px">Nabídky</div>
<div class="l" style="left:480px;top:237.500px">Faktury přijaté</div>
<div class="l" style="left:571px;top:237.500px">Poptávky</div>
<div class="l" style="left:663.500px;top:237.500px">Aktivity</div>
<div class="l" style="left:755px;top:237.500px">Úkoly</div>
<div class="l" style="left:847px;top:237.500px">Poskytnuté<br>zálohy</div>
<div class="l" style="left:938px;top:237.500px">Položky nákupu</div>
<div class="l" style="left:1030px;top:237.500px">Zakázky</div>
<div class="l" style="left:1121px;top:237.500px">Variantní TP</div>

<div class="l" style="left:205px;top:329px">Objednávky<br>přijaté</div>
<div class="l" style="left:296px;top:329px">Ostatní závazky</div>
<div class="l" style="left:388px;top:329px">Kontrakty nákup</div>
<div class="l" style="left:480px;top:329px">Dodací listy<br>vydané</div>
<div class="l" style="left:571px;top:329px">Výdejky</div>
<div class="l" style="left:663.500px;top:329px">Faktury vydané</div>
<div class="l" style="left:755px;top:329px">Rezervační listy</div>
<div class="l" style="left:847px;top:329px">Operace</div>
<div class="l" style="left:938px;top:329px">Zdroje</div>
<div class="l" style="left:1030px;top:329px">Přijaté zálohy</div>
<div class="l" style="left:1121px;top:329px">Položky prodeje</div>

<div class="l" style="left:205px;top:420.500px">Ostatní<br>pohledávky</div>
<div class="l" style="left:297px;top:420.500px">Položky<br>převodek</div>
<div class="l" style="left:388px;top:420.500px">Kontrakty prodej</div>
<div class="l" style="left:480px;top:420.500px">Kódy zakázek</div>
<div class="l" style="left:571px;top:420.500px">Vyhledání<br>sériového čísla</div>
<div class="l" style="left:663.500px;top:420.500px">Kalendáře</div>
<div class="l" style="left:755px;top:420.500px">Průvodky</div>
<div class="l" style="left:847px;top:420.500px">Výrobní příkazy</div>
<div class="l" style="left:938px;top:420.500px">Položky výroby</div>
<div class="l" style="left:1030px;top:420.500px">Výroba po<br>druzích</div>
<div class="l" style="left:1121px;top:420.500px">Operace<br>průvodek</div>

<div class="l" style="left:205px;top:512px">Pokladní<br>doklady</div>
<div class="l" style="left:297px;top:512px">Bankovní příkazy</div>
<div class="l" style="left:388px;top:512px">Bankovní výpisy</div>
<div class="l" style="left:480px;top:512px">Kniha<br>Saldokonto</div>
<div class="l" style="left:571px;top:512px">Interní doklady</div>
<div class="l" style="left:663.500px;top:512px">Řízení financí</div>
<div class="l" style="left:755px;top:512px">Položky<br>účetního deníku</div>
<div class="l" style="left:847px;top:512px">Účetní deník</div>
<div class="l" style="left:938px;top:512px">Hlavní kniha</div>
<div class="l" style="left:1030px;top:512px">Řádky ek. analýz</div>
<div class="l" style="left:1121px;top:512px">Weby a e-shopy</div>

<div class="l" style="left:205px;top:603.500px">Kategorie -<br>strom</div>
<div class="l" style="left:297px;top:603.500px">Menu webu</div>
<div class="l" style="left:388px;top:603.500px">Textové stránky</div>
<div class="l" style="left:480px;top:603.500px">Bannery</div>
<div class="l" style="left:571px;top:603.500px">Novinky webu</div>
<div class="l" style="left:663.500px;top:603.500px">Blogy</div>
<div class="l" style="left:755px;top:603.500px">Slevové kupóny</div>
<div class="l" style="left:847px;top:603.500px">Promo akce</div>
<div class="l" style="left:938px;top:603.500px">Věrnostní<br>programy</div>
<div class="l" style="left:1030px;top:603.500px">Kalkulace</div>
</body>
</html>
